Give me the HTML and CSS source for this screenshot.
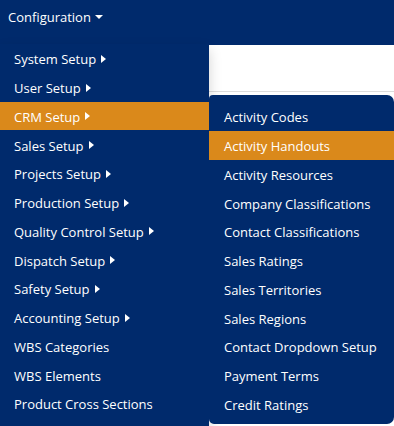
FILE: index.html
```html
<!DOCTYPE html>
<html>
<head>
<meta charset="utf-8">
<link rel="stylesheet" href="styles.css">
</head>
<body>
<header class="topbar">
  <span class="top-link">Configuration <span class="caret-down"></span></span>
</header>
<main class="page">
  <div class="toolbar"></div>
</main>
<nav class="dropdown">
  <ul class="menu">
    <li class="item">System Setup <span class="caret-right"></span></li>
    <li class="item">User Setup <span class="caret-right"></span></li>
    <li class="item active">CRM Setup <span class="caret-right"></span></li>
    <li class="item">Sales Setup <span class="caret-right"></span></li>
    <li class="item">Projects Setup <span class="caret-right"></span></li>
    <li class="item">Production Setup <span class="caret-right"></span></li>
    <li class="item">Quality Control Setup <span class="caret-right"></span></li>
    <li class="item">Dispatch Setup <span class="caret-right"></span></li>
    <li class="item">Safety Setup <span class="caret-right"></span></li>
    <li class="item">Accounting Setup <span class="caret-right"></span></li>
    <li class="item">WBS Categories</li>
    <li class="item">WBS Elements</li>
    <li class="item">Product Cross Sections</li>
  </ul>
</nav>
<nav class="submenu">
  <ul class="menu">
    <li class="item sub">Activity Codes</li>
    <li class="item sub active">Activity Handouts</li>
    <li class="item sub">Activity Resources</li>
    <li class="item sub">Company Classifications</li>
    <li class="item sub">Contact Classifications</li>
    <li class="item sub">Sales Ratings</li>
    <li class="item sub">Sales Territories</li>
    <li class="item sub">Sales Regions</li>
    <li class="item sub">Contact Dropdown Setup</li>
    <li class="item sub">Payment Terms</li>
    <li class="item sub">Credit Ratings</li>
  </ul>
</nav>
</body>
</html>
```

FILE: styles.css
```css
* { box-sizing: border-box; }
html, body { margin: 0; padding: 0; background: #fff; }
body {
  font-family: "Open Sans", "Noto Sans", sans-serif;
  font-size: 13px;
  color: #fff;
  width: 394px;
  height: 426px;
  overflow: hidden;
  position: relative;
}
.topbar {
  height: 45px;
  background: #002a6c;
  padding: 8px 0 0 8px;
  line-height: 18px;
}
.top-link { display: inline-flex; align-items: center; gap: 3px; }
.caret-down {
  display: inline-block;
  width: 0; height: 0;
  border-left: 4px solid transparent;
  border-right: 4px solid transparent;
  border-top: 4px solid #fff;
  margin-left: 1px;
}
.page { background: #fff; }
.toolbar {
  height: 47px;
  border-bottom: 1px solid #dcdcdc;
}
.menu { list-style: none; margin: 0; padding: 0; }
.dropdown {
  position: absolute;
  left: 0; top: 44px;
  width: 209px;
  height: 400px;
  background: #002a6c;
  box-shadow: 0 6px 12px rgba(0,0,0,0.18);
}
.item {
  height: 28.75px;
  line-height: 26px;
  padding-left: 14px;
  padding-top: 2px;
  white-space: nowrap;
  display: flex;
  align-items: center;
}
.item.active { background: #da891b; }
.caret-right {
  display: inline-block;
  width: 0; height: 0;
  border-top: 4.5px solid transparent;
  border-bottom: 4.5px solid transparent;
  border-left: 5px solid #fff;
  margin-left: 5px;
  margin-top: -1px;
}
.submenu {
  position: absolute;
  left: 209px; top: 95px;
  width: 185px;
  height: 329px;
  background: #002a6c;
  border-radius: 4px 7px 7px 5px;
  padding-top: 7px;
}
.item.sub { padding-left: 15px; }
```
